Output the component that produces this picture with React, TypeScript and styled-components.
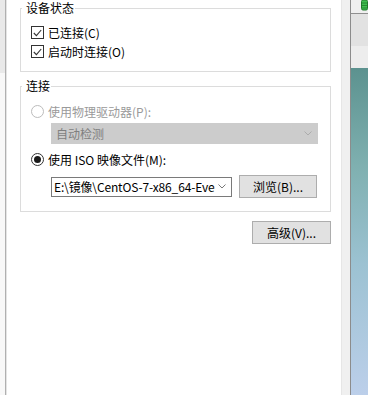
import React from "react";
import styled, { createGlobalStyle } from "styled-components";

const GlobalStyle = createGlobalStyle`
  html, body, #root {
    margin: 0;
    height: 100%;
  }
  body {
    font-family: "Noto Sans CJK SC", "Noto Sans", sans-serif;
    font-size: 12px;
    color: #000;
    background: #fff;
  }
`;

const Screen = styled.div`
  display: flex;
  height: 100%;
  overflow: hidden;
`;

const LeftEdge = styled.div`
  flex: none;
  width: 5px;
  display: flex;
  flex-direction: column;
  border-right: 1px solid #b0b0b0;
`;

const EdgePart = styled.div<{ $h?: number; $bg: string }>`
  flex: ${(p) => (p.$h ? `none` : `1`)};
  height: ${(p) => (p.$h ? `${p.$h}px` : `auto`)};
  background: ${(p) => p.$bg};
`;

const Panel = styled.div`
  flex: none;
  width: 335px;
  box-sizing: border-box;
  border-left: 1px solid #e4e4e4;
  padding: 0 10px 0 13px;
  display: flex;
  flex-direction: column;
  background: #fff;
`;

const FrameStrip = styled.div`
  flex: none;
  width: 8px;
  background: #f0f0f0;
  border-left: 1px solid #e6e6e6;
  border-right: 1px solid #8c8c8c;
  box-sizing: content-box;
`;

const Desktop = styled.div`
  flex: 1;
  display: flex;
  flex-direction: column;
`;

const TaskTop = styled.div`
  height: 13px;
  background: #efefef;
  border-bottom: 1px solid #8f8f8f;
  display: flex;
  justify-content: flex-end;
  align-items: flex-start;
`;

const Band = styled.div<{ $h: number; $bg: string }>`
  height: ${(p) => p.$h}px;
  background: ${(p) => p.$bg};
`;

const Wallpaper = styled.div`
  flex: 1;
  background: linear-gradient(
    to bottom,
    #5c928f 0%,
    #7fb0b0 30%,
    #9cc2d2 60%,
    #bccfea 100%
  );
`;

const Group = styled.fieldset`
  margin: 0;
  padding: 7px 12px 10px 1px;
  border: 1px solid #dcdcdc;
  display: flex;
  flex-direction: column;
  min-width: 0;
`;

const Group2 = styled(Group)`
  margin-top: 6px;
  padding-top: 8px;
  padding-bottom: 13px;
`;

const Legend = styled.legend`
  padding: 0 1px 0 4px;
  line-height: 16px;
`;

const Body = styled.div`
  display: flex;
  flex-direction: column;
  padding-left: 9px;
`;

const Row = styled.label<{ $disabled?: boolean; $top?: number }>`
  display: flex;
  align-items: center;
  height: 19px;
  gap: 4px;
  line-height: 16px;
  margin-top: ${(p) => p.$top ?? 0}px;
  color: ${(p) => (p.$disabled ? "#9a9a9a" : "#000")};
`;

const Box = styled.span`
  width: 13px;
  height: 13px;
  box-sizing: border-box;
  border: 1px solid #333;
  background: #fff;
  display: flex;
  align-items: center;
  justify-content: center;
  flex: none;
`;

const Radio = styled.span<{ $disabled?: boolean }>`
  width: 13px;
  height: 13px;
  box-sizing: border-box;
  border-radius: 50%;
  border: 1px solid ${(p) => (p.$disabled ? "#bcbcbc" : "#333")};
  background: #fff;
  display: flex;
  align-items: center;
  justify-content: center;
  flex: none;
`;

const Dot = styled.span`
  width: 7px;
  height: 7px;
  border-radius: 50%;
  background: #1a1a1a;
`;

const Indented = styled.div<{ $top: number }>`
  margin-left: 20px;
  margin-top: ${(p) => p.$top}px;
  display: flex;
  align-items: center;
  gap: 7px;
`;

const Select = styled.div<{ $disabled?: boolean; $w: number; $h: number }>`
  width: ${(p) => p.$w}px;
  height: ${(p) => p.$h}px;
  box-sizing: border-box;
  flex: none;
  border: 1px solid ${(p) => (p.$disabled ? "#cccccc" : "#7a7a7a")};
  background: ${(p) => (p.$disabled ? "#cccccc" : "#fff")};
  color: ${(p) => (p.$disabled ? "#7f7f7f" : "#000")};
  display: flex;
  align-items: center;
  padding: 0 5px 0 ${(p) => (p.$disabled ? 4 : 2)}px;
  gap: 3px;
  line-height: 16px;
`;

const SelectText = styled.span<{ $tight?: boolean }>`
  flex: 1;
  white-space: nowrap;
  overflow: hidden;
  letter-spacing: ${(p) => (p.$tight ? "-0.15px" : "normal")};
`;

const Button = styled.button<{ $w?: number }>`
  width: ${(p) => p.$w ?? 79}px;
  height: 23px;
  box-sizing: border-box;
  flex: none;
  border: 1px solid #adadad;
  background: #e1e1e1;
  font: inherit;
  color: #000;
  padding: 0;
  line-height: 16px;
`;

const Footer = styled.div`
  display: flex;
  justify-content: flex-end;
  margin-top: 9px;
`;

const Check = () => (
  <svg width="9" height="8" viewBox="0 0 9 8">
    <polyline points="0.8,4 3.4,6.6 8.2,1" fill="none" stroke="#333" strokeWidth="1.1" />
  </svg>
);

const Chevron = ({ color }: { color: string }) => (
  <svg width="8" height="5" viewBox="0 0 8 5">
    <polyline points="0.5,0.5 4,4 7.5,0.5" fill="none" stroke={color} strokeWidth="0.9" />
  </svg>
);

const Battery = () => (
  <svg width="7" height="11" viewBox="0 0 7 11">
    <rect x="0.5" y="0" width="6" height="10" rx="1.5" fill="#3fbf4f" stroke="#1f7a2b" />
    <line x1="1" y1="3" x2="6" y2="3" stroke="#1f7a2b" strokeWidth="0.8" />
    <line x1="1" y1="5.5" x2="6" y2="5.5" stroke="#1f7a2b" strokeWidth="0.8" />
    <line x1="1" y1="8" x2="6" y2="8" stroke="#1f7a2b" strokeWidth="0.8" />
  </svg>
);

export default function App() {
  return (
    <Screen>
      <GlobalStyle />
      <LeftEdge>
        <EdgePart $h={73} $bg="#e9e9e9" />
        <EdgePart $bg="#f8f8f8" />
      </LeftEdge>
      <Panel>
        <Group>
          <Legend>设备状态</Legend>
          <Body>
            <Row>
              <Box>
                <Check />
              </Box>
              已连接(C)
            </Row>
            <Row>
              <Box>
                <Check />
              </Box>
              启动时连接(O)
            </Row>
          </Body>
        </Group>
        <Group2>
          <Legend>连接</Legend>
          <Body>
            <Row $disabled>
              <Radio $disabled />
              使用物理驱动器(P):
            </Row>
            <Indented $top={2}>
              <Select $disabled $w={267} $h={21}>
                <SelectText>自动检测</SelectText>
                <Chevron color="#a8a8a8" />
              </Select>
            </Indented>
            <Row $top={6}>
              <Radio>
                <Dot />
              </Radio>
              使用 ISO 映像文件(M):
            </Row>
            <Indented $top={6}>
              <Select $w={181} $h={20}>
                <SelectText $tight>E:\镜像\CentOS-7-x86_64-Eve</SelectText>
                <Chevron color="#6a6a6a" />
              </Select>
              <Button $w={78}>浏览(B)...</Button>
            </Indented>
          </Body>
        </Group2>
        <Footer>
          <Button>高级(V)...</Button>
        </Footer>
      </Panel>
      <FrameStrip />
      <Desktop>
        <TaskTop>
          <Battery />
        </TaskTop>
        <Band $h={32} $bg="#e2e2e2" />
        <Band $h={22} $bg="#ededed" />
        <Wallpaper />
      </Desktop>
    </Screen>
  );
}
